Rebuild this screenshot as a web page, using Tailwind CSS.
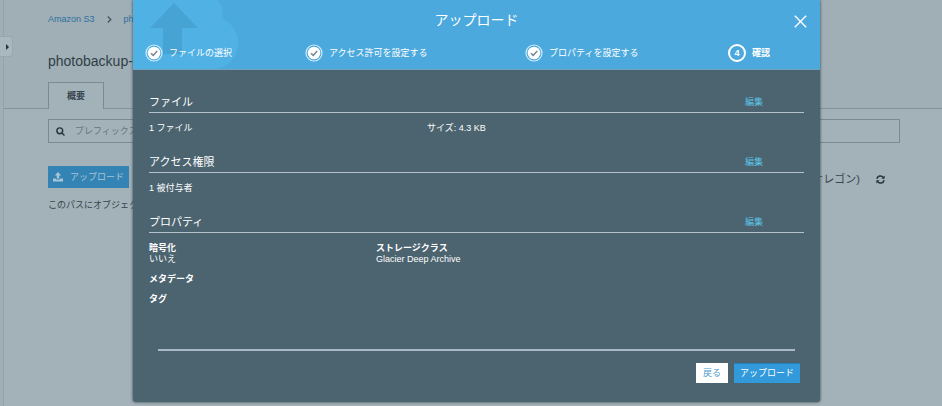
<!DOCTYPE html>
<html lang="ja">
<head>
<meta charset="utf-8">
<title>アップロード</title>
<script src="https://cdn.jsdelivr.net/npm/@tailwindcss/browser@4"></script>
</head>
<body class="bg-[#a3b2b9] font-['Liberation_Sans','Noto_Sans_CJK_JP',sans-serif] text-[9px] leading-[11px] text-[#36454e]">
<div class="relative flex min-h-screen overflow-hidden">
  <aside class="w-1 shrink-0 border-r border-[#94a2a9] bg-[#a0afb6]">
    <button type="button" aria-label="メニューを開く" class="absolute left-0 top-9 flex h-[21px] w-[13px] items-center justify-end rounded-r-sm border border-l-0 border-[#98a6ad] bg-[#a9b7be] pr-[3px]">
      <svg class="h-1.5 w-[3px]" viewBox="0 0 3 6" fill="#26343c"><path d="M0 0l3 3L0 6z"/></svg>
    </button>
  </aside>
  <main class="min-w-0 flex-1">
    <header class="border-b border-[#83939b] bg-[#a0afb6] pl-11 pt-[14px]">
      <nav class="flex items-center gap-3 text-[#2c6f9f]">
        <a href="#">Amazon S3</a>
        <svg class="h-[7px] w-[5px]" viewBox="0 0 5 7" fill="none" stroke="#46555d" stroke-width="1.3"><path d="M.8.5l3 3-3 3"/></svg>
        <a href="#">photobackup</a>
      </nav>
      <h1 class="mt-[27px] text-sm leading-[18px] text-[#2f3e46]">photobackup-</h1>
      <a href="#" class="-mb-px mt-3 flex h-[27px] w-14 items-center justify-center border border-b-0 border-[#7b8b93] bg-[#a3b2b9] font-bold">概要</a>
    </header>
    <div class="pl-11 pr-[42px] pt-2.5">
      <label class="flex h-6 items-center gap-2.5 border border-[#7b8b93] px-[7px]">
        <svg class="size-[9px] shrink-0" viewBox="0 0 10 10" fill="none" stroke="#26343c" stroke-width="1.6"><circle cx="4.2" cy="4.2" r="3.2"/><path d="M6.6 6.6L9.4 9.4"/></svg>
        <input type="text" aria-label="プレフィックス" placeholder="プレフィックスを入力" class="min-w-0 flex-1 bg-transparent outline-none placeholder:text-[#66767f]">
      </label>
      <div class="mt-[23px] flex items-center justify-between pr-[15px]">
        <button type="button" class="flex h-[22px] items-center gap-[7px] bg-[#3384b5] px-[5px] text-[#a9c5d6]">
          <svg class="size-2.5" viewBox="0 0 10 10" fill="currentColor"><path d="M5 0l3.2 3.4H6.2V6.5H3.8V3.4H1.8zM0 6.5h2.9v1h4.2v-1H10V9.4H0z"/></svg>
          アップロード
        </button>
        <div class="flex items-center gap-4 pt-1 text-[11px] leading-4">
          <span>米国西部 (オレゴン)</span>
          <button type="button" aria-label="更新">
            <svg class="size-[9px]" viewBox="0 0 10 10" fill="none" stroke="#26343c" stroke-width="1.7"><path d="M1 4.2A4 4 0 0 1 8 2.6M9 5.8A4 4 0 0 1 2 7.4"/><path d="M9.6.6v3.6H6zM.4 9.4V5.8H4z" fill="#26343c" stroke="none"/></svg>
          </button>
        </div>
      </div>
      <p class="mt-3">このパスにオブジェクトはありません。</p>
    </div>
  </main>

  <div class="absolute inset-0 pb-1 pl-[133px] pr-[122px]">
    <section role="dialog" aria-labelledby="dialog-title" class="flex h-full flex-col rounded-b-[3px] bg-[#4c6470] text-white shadow-[0_0_3px_#2b3a42]">
      <header class="relative overflow-hidden border-b border-[#6fa3c0] bg-[#4ca9dd] pb-[7px] pt-[11px]">
        <svg class="absolute left-0 top-0 h-[69px] w-[110px]" viewBox="0 0 110 69">
          <path d="M0 0H84C89 5 91 11 89 19C100 23 106 34 105 45C104 58 95 67 82 69H0z" fill="#50b1e5"/>
          <path d="M41 3L65 28H49V54H30V28H17z" fill="#48a3d5"/>
        </svg>
        <h2 id="dialog-title" class="relative text-center text-sm leading-[18px]">アップロード</h2>
        <button type="button" aria-label="閉じる" class="absolute right-[13px] top-[15px]">
          <svg class="size-[13px]" viewBox="0 0 13 13" fill="none" stroke="#fff" stroke-width="1.4"><path d="M.8.8l11.4 11.4M12.2.8L.8 12.2"/></svg>
        </button>
        <ol class="relative mt-[15px] grid grid-cols-[160fr_220fr_203fr_92fr] pl-3">
          <li class="flex items-center gap-1.5">
            <svg class="size-[18px]" viewBox="0 0 18 18" fill="none"><circle cx="9" cy="9" r="8" stroke="#d3ecfa" stroke-width="1.2"/><circle cx="9" cy="9" r="6.3" fill="#fff"/><path d="M6 9.2l2.2 2.2L12.2 7" stroke="#75858d" stroke-width="1.5"/></svg>
            ファイルの選択</li>
          <li class="flex items-center gap-1.5">
            <svg class="size-[18px]" viewBox="0 0 18 18" fill="none"><circle cx="9" cy="9" r="8" stroke="#d3ecfa" stroke-width="1.2"/><circle cx="9" cy="9" r="6.3" fill="#fff"/><path d="M6 9.2l2.2 2.2L12.2 7" stroke="#75858d" stroke-width="1.5"/></svg>
            アクセス許可を設定する</li>
          <li class="flex items-center gap-1.5">
            <svg class="size-[18px]" viewBox="0 0 18 18" fill="none"><circle cx="9" cy="9" r="8" stroke="#d3ecfa" stroke-width="1.2"/><circle cx="9" cy="9" r="6.3" fill="#fff"/><path d="M6 9.2l2.2 2.2L12.2 7" stroke="#75858d" stroke-width="1.5"/></svg>
            プロパティを設定する</li>
          <li class="flex items-center gap-1.5 font-bold"><span class="flex size-[18px] items-center justify-center rounded-full border-2">4</span>確認</li>
        </ol>
      </header>
      <div class="px-4 pt-[22px]">
        <section class="h-[60px]">
          <div class="flex h-[21px] items-center justify-between border-b border-[#b4c2ca] pr-[41px]"><h3 class="text-[11px]">ファイル</h3><a href="#" class="text-[#5cc3e6]">編集</a></div>
          <div class="grid grid-cols-[278fr_377fr] pt-[10px]"><span>1 ファイル</span><span>サイズ: 4.3 KB</span></div>
        </section>
        <section class="h-[60px]">
          <div class="flex h-[21px] items-center justify-between border-b border-[#b4c2ca] pr-[41px]"><h3 class="text-[11px]">アクセス権限</h3><a href="#" class="text-[#5cc3e6]">編集</a></div>
          <p class="pt-[10px]">1 被付与者</p>
        </section>
        <section>
          <div class="flex h-[21px] items-center justify-between border-b border-[#b4c2ca] pr-[41px]"><h3 class="text-[11px]">プロパティ</h3><a href="#" class="text-[#5cc3e6]">編集</a></div>
          <dl class="grid grid-cols-[227fr_428fr] gap-y-[9px] pt-[10px]">
            <div><dt class="font-bold">暗号化</dt><dd>いいえ</dd></div>
            <div><dt class="font-bold">ストレージクラス</dt><dd>Glacier Deep Archive</dd></div>
            <dt class="col-span-2 font-bold">メタデータ</dt>
            <dt class="col-span-2 font-bold">タグ</dt>
          </dl>
        </section>
      </div>
      <footer class="mt-auto px-[25px] pb-[19px]">
        <hr class="border-t-2 border-[#a9bac4]">
        <div class="-mr-[5px] mt-3 flex justify-end gap-1.5">
          <button type="button" class="h-5 bg-white px-[7px] text-[#4a9bc9]">戻る</button>
          <button type="button" class="h-5 border-t border-[#2480b8] bg-[#3299db] px-1.5">アップロード</button>
        </div>
      </footer>
    </section>
  </div>
</div>
</body>
</html>
